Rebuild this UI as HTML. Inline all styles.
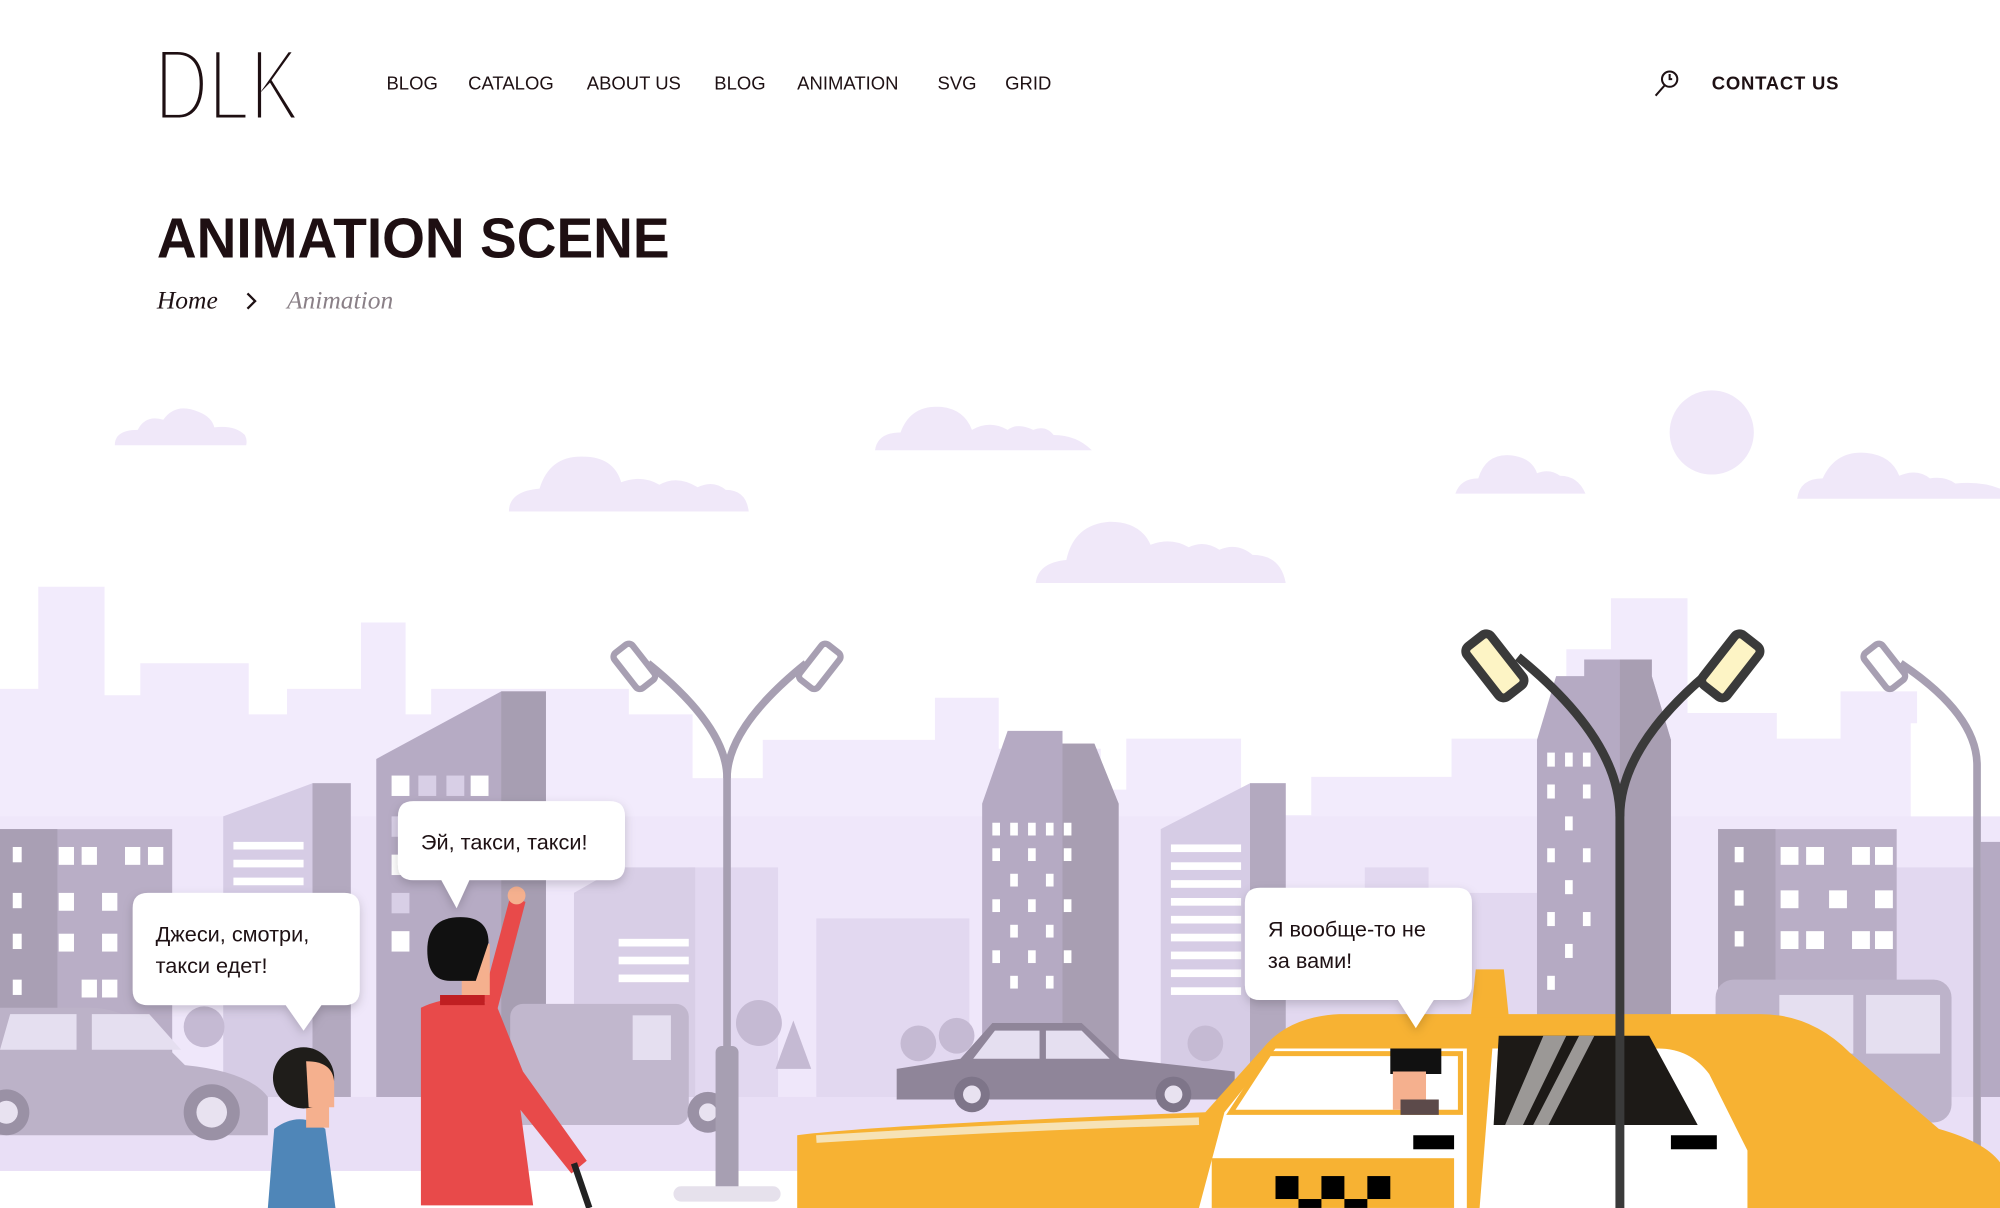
<!DOCTYPE html>
<html><head><meta charset="utf-8"><style>
html,body{margin:0;padding:0;background:#fff;overflow:hidden}
svg{display:block}
</style></head><body>
<svg width="2000" height="1208" viewBox="0 0 1568 947" xmlns="http://www.w3.org/2000/svg" font-family="Liberation Sans, sans-serif">
<defs>
<filter id="sh" x="-20%" y="-20%" width="140%" height="160%"><feDropShadow dx="0" dy="3" stdDeviation="4" flood-color="#000" flood-opacity="0.18"/></filter>
</defs>
<rect width="1568" height="947" fill="#fff"/>
<!-- header -->
<text x="121" y="94" font-size="80" fill="#1e0f12" stroke="#fff" stroke-width="4" textLength="114" lengthAdjust="spacingAndGlyphs">DLK</text>
<g font-size="14.5" fill="#1e1114">
<text x="303" y="70">BLOG</text><text x="367" y="70">CATALOG</text><text x="460" y="70">ABOUT US</text>
<text x="560" y="70">BLOG</text><text x="625" y="70">ANIMATION</text><text x="735" y="70">SVG</text><text x="788" y="70">GRID</text>
<text x="1342" y="70" font-weight="bold" letter-spacing="0.6">CONTACT US</text>
</g>
<g stroke="#1e1114" stroke-width="1.6" fill="none"><circle cx="1309" cy="62" r="6"/><path d="M1305 67 L1298 75"/><path d="M1309 58v4h2"/></g>
<text x="123" y="202" font-size="44" font-weight="bold" fill="#1e0f12" textLength="402" lengthAdjust="spacingAndGlyphs">ANIMATION SCENE</text>
<text x="123" y="242" font-size="20" font-style="italic" font-family="Liberation Serif, serif" fill="#1e1114">Home</text>
<path d="M194 230l6 6-6 6" stroke="#1e1114" stroke-width="1.8" fill="none"/>
<text x="225" y="242" font-size="20" font-style="italic" font-family="Liberation Serif, serif" fill="#8a8087">Animation</text>
<!-- clouds -->
<g fill="#f0e8f9">
<path d="M90 349q0-12 18-12q6-12 20-8q10-14 28-6q10 4 12 12q16-2 24 6q2 4 1 8z"/>
<path d="M686 353q2-14 20-14q8-22 32-20q18 2 24 18q14-8 28 0q8-6 20 0q10-4 16 4q18 0 30 12z"/>
<path d="M399 401q0-16 24-18q8-26 34-25q24 0 30 20q16-6 30 2q14-8 30 2q12-6 22 2q16 0 18 17z"/>
<path d="M1141 387q4-12 18-12q6-20 26-18q16 2 20 14q10-4 18 2q14 0 20 14z"/>
<path d="M1409 391q2-16 20-16q10-22 34-20q20 2 26 18q14-6 24 2q12-2 20 4q20-2 35 4v8z"/>
<path d="M812 457q2-16 24-18q6-28 34-30q24 0 32 18q16-6 30 2q12-6 24 2q14-6 26 4q22 0 26 22z"/>
<circle cx="1342" cy="339" r="33"/>
</g>
<!-- far skyline -->
<path fill="#f2ebfc" d="M0 540h30v-80h52v85h28v-25h85v40h30v-20h58v-52h35v72h20v-20h155v20h50v50h55v-30h135v-33h50v40h80v32h20v-40h90v60h55v-30h110v-30h90v-70h35v-40h60v90h70v20h50v-37h60v25h-5V860H0z"/>
<rect x="0" y="640" width="1568" height="220" fill="#efe7fa"/>
<rect x="0" y="860" width="1568" height="58" fill="#e9dff6"/>
<g fill="#e2d8f0">
<rect x="640" y="720" width="120" height="140"/><rect x="1000" y="700" width="210" height="160"/><rect x="1450" y="680" width="118" height="180"/>
<rect x="540" y="680" width="70" height="180"/><rect x="1070" y="680" width="50" height="180"/>
</g>
<!-- buildings -->
<g>
<rect x="0" y="650" width="135" height="210" fill="#b9aec6"/><rect x="0" y="650" width="45" height="210" fill="#a99fb4"/>
<g fill="#fff"><rect x="46" y="664" width="12" height="14"/><rect x="64" y="664" width="12" height="14"/><rect x="98" y="664" width="12" height="14"/><rect x="116" y="664" width="12" height="14"/>
<rect x="46" y="700" width="12" height="14"/><rect x="80" y="700" width="12" height="14"/><rect x="46" y="732" width="12" height="14"/><rect x="80" y="732" width="12" height="14"/><rect x="64" y="768" width="12" height="14"/><rect x="80" y="768" width="12" height="14"/>
<rect x="10" y="664" width="7" height="12"/><rect x="10" y="700" width="7" height="12"/><rect x="10" y="732" width="7" height="12"/><rect x="10" y="768" width="7" height="12"/></g>
<path d="M175 640l70-26h30v246H175z" fill="#d6cce5"/><rect x="245" y="614" width="30" height="246" fill="#b3a9bf"/>
<g fill="#fff"><rect x="183" y="660" width="55" height="6"/><rect x="183" y="674" width="55" height="6"/><rect x="183" y="688" width="55" height="6"/></g>
<path d="M295 595l98-53h35v318H295z" fill="#b6abc4"/><rect x="393" y="542" width="35" height="318" fill="#a79eb2"/>
<g fill="#fff"><rect x="307" y="608" width="14" height="16"/><rect x="350" y="608" width="14" height="16" fill="#d8cfe6"/><rect x="369" y="608" width="14" height="16"/><rect x="328" y="608" width="14" height="16" fill="#d8cfe6"/>
<rect x="307" y="640" width="14" height="16" fill="#d8cfe6"/><rect x="307" y="670" width="14" height="16"/><rect x="307" y="700" width="14" height="16" fill="#d8cfe6"/><rect x="307" y="730" width="14" height="16"/></g>
<path d="M450 700l35-20h60v180H450z" fill="#d8cee6"/>
<g fill="#fff"><rect x="485" y="736" width="55" height="6"/><rect x="485" y="750" width="55" height="6"/><rect x="485" y="764" width="55" height="6"/></g>
<path d="M770 630l20-57h43v10h25l19 47v230H770z" fill="#b5aac3"/><path d="M833 583h25l19 47v230h-44z" fill="#a89eb2"/>
<g fill="#fff"><rect x="778" y="645" width="6" height="10"/><rect x="792" y="645" width="6" height="10"/><rect x="806" y="645" width="6" height="10"/><rect x="820" y="645" width="6" height="10"/><rect x="834" y="645" width="6" height="10"/>
<rect x="778" y="665" width="6" height="10"/><rect x="806" y="665" width="6" height="10"/><rect x="834" y="665" width="6" height="10"/><rect x="792" y="685" width="6" height="10"/><rect x="820" y="685" width="6" height="10"/>
<rect x="778" y="705" width="6" height="10"/><rect x="806" y="705" width="6" height="10"/><rect x="834" y="705" width="6" height="10"/><rect x="792" y="725" width="6" height="10"/><rect x="820" y="725" width="6" height="10"/>
<rect x="778" y="745" width="6" height="10"/><rect x="806" y="745" width="6" height="10"/><rect x="834" y="745" width="6" height="10"/><rect x="792" y="765" width="6" height="10"/><rect x="820" y="765" width="6" height="10"/></g>
<path d="M910 650l70-36h28v246H910z" fill="#d6cce5"/><rect x="980" y="614" width="28" height="246" fill="#b3a9bf"/>
<g fill="#fff"><rect x="918" y="662" width="55" height="6"/><rect x="918" y="676" width="55" height="6"/><rect x="918" y="690" width="55" height="6"/><rect x="918" y="704" width="55" height="6"/><rect x="918" y="718" width="55" height="6"/><rect x="918" y="732" width="55" height="6"/><rect x="918" y="746" width="55" height="6"/><rect x="918" y="760" width="55" height="6"/><rect x="918" y="774" width="55" height="6"/></g>
<path d="M1205 580l15-50h22v-13h53v13l15 50v280h-105z" fill="#b5aac3"/><path d="M1270 517h25v13l15 50v280h-40z" fill="#a89eb2"/>
<g fill="#fff"><rect x="1213" y="590" width="6" height="11"/><rect x="1227" y="590" width="6" height="11"/><rect x="1241" y="590" width="6" height="11"/><rect x="1213" y="615" width="6" height="11"/><rect x="1241" y="615" width="6" height="11"/><rect x="1227" y="640" width="6" height="11"/><rect x="1213" y="665" width="6" height="11"/><rect x="1241" y="665" width="6" height="11"/><rect x="1227" y="690" width="6" height="11"/><rect x="1213" y="715" width="6" height="11"/><rect x="1241" y="715" width="6" height="11"/><rect x="1227" y="740" width="6" height="11"/><rect x="1213" y="765" width="6" height="11"/></g>
<rect x="1347" y="650" width="140" height="210" fill="#b9aec6"/><rect x="1347" y="650" width="45" height="210" fill="#aba1b6"/>
<g fill="#fff"><rect x="1396" y="664" width="14" height="14"/><rect x="1416" y="664" width="14" height="14"/><rect x="1452" y="664" width="14" height="14"/><rect x="1470" y="664" width="14" height="14"/>
<rect x="1396" y="698" width="14" height="14"/><rect x="1434" y="698" width="14" height="14"/><rect x="1470" y="698" width="14" height="14"/>
<rect x="1396" y="730" width="14" height="14"/><rect x="1416" y="730" width="14" height="14"/><rect x="1452" y="730" width="14" height="14"/><rect x="1470" y="730" width="14" height="14"/>
<rect x="1360" y="664" width="7" height="12"/><rect x="1360" y="698" width="7" height="12"/><rect x="1360" y="730" width="7" height="12"/></g>
<rect x="1553" y="660" width="15" height="200" fill="#b5aac3"/>
</g>
<g fill="#c5bad3"><circle cx="160" cy="805" r="16"/><circle cx="595" cy="802" r="18"/><path d="M622 800l-14 38h28z"/><circle cx="720" cy="818" r="14"/><circle cx="750" cy="812" r="14"/><circle cx="1050" cy="828" r="18"/><circle cx="1093" cy="818" r="14"/><circle cx="945" cy="818" r="14"/></g>
<g>
<path d="M0 790h70q30 0 55 25l20 20q50 5 65 25v30H0z" fill="#bcb2c8"/>
<path d="M8 795h52v28H0z M72 795h45l25 28H72z" fill="#e5dff0"/>
<circle cx="166" cy="872" r="22" fill="#9a91a5"/><circle cx="166" cy="872" r="12" fill="#e8e2f0"/><circle cx="5" cy="872" r="18" fill="#9a91a5"/><circle cx="5" cy="872" r="9" fill="#e8e2f0"/>
<rect x="400" y="787" width="140" height="95" rx="10" fill="#c1b7cd"/><rect x="496" y="796" width="30" height="35" fill="#e5dff0"/><circle cx="555" cy="872" r="16" fill="#9a91a5"/><circle cx="555" cy="872" r="7" fill="#e8e2f0"/>
<path d="M703 838l50-8 25-28h70l30 28 90 10v22H703z" fill="#8f8599"/><path d="M780 808h35v22h-52z M820 808h28l22 22h-50z" fill="#e5dff0"/>
<circle cx="762" cy="858" r="14" fill="#7e7589"/><circle cx="762" cy="858" r="7" fill="#e8e2f0"/><circle cx="920" cy="858" r="14" fill="#7e7589"/><circle cx="920" cy="858" r="7" fill="#e8e2f0"/>
<rect x="1345" y="768" width="185" height="112" rx="14" fill="#bdb3ca"/><rect x="1395" y="780" width="58" height="46" fill="#e5dff0"/><rect x="1463" y="780" width="58" height="46" fill="#e5dff0"/>
</g>
<g fill="none" stroke="#a79fb2" stroke-width="6">
<path d="M570 930V610q0-40-62-90"/><path d="M570 610q0-40 62-90"/>
<path d="M1550 947V600q0-40-60-80"/>
</g>
<g fill="#fff" stroke="#a79fb2" stroke-width="5"><rect x="488" y="505" width="18" height="35" rx="4" transform="rotate(-38 497 522)"/><rect x="634" y="505" width="18" height="35" rx="4" transform="rotate(38 643 522)"/><rect x="1468" y="505" width="18" height="35" rx="4" transform="rotate(-38 1477 522)"/></g>
<rect x="561" y="820" width="18" height="115" rx="5" fill="#a79fb2"/><rect x="528" y="930" width="84" height="12" rx="6" fill="#e6e1ec"/>
<!-- woman -->
<path d="M215 885q20-15 40 0l8 62h-53z" fill="#4f86b8"/>
<path d="M240 852h18v32h-18z" fill="#f5b08e"/>
<circle cx="238" cy="845" r="24" fill="#1f1d1a"/><path d="M240 832q22 0 22 18v18h-20z" fill="#f5b08e"/>
<!-- man -->
<path d="M330 790q30-14 60 0l20 50 50 70-12 10-40-50 10 75h-88z" fill="#e84a4a"/>
<path d="M378 785l22-82 12 4-22 84z" fill="#e84a4a"/><circle cx="405" cy="702" r="7" fill="#f5b08e"/>
<path d="M345 780h35v8h-35z" fill="#c01f22"/>
<path d="M362 740h22v40h-22z" fill="#f5b08e"/>
<path d="M335 745q0-26 26-26q22 0 22 20l-10 30h-20q-18 0-18-24z" fill="#111"/>
<path d="M450 912l12 35" stroke="#222" stroke-width="5"/>
<!-- taxi -->
<path d="M625 890q60-8 320-18l45-50q20-25 60-27h330q40 0 70 30l70 60q70 20 48 60v2H625z" fill="#f7b233"/>
<path d="M960 872l40-50h150v125H940z" fill="#fff"/><path d="M1170 822h130q25 0 40 20l30 60v45h-210z" fill="#fff"/>
<path d="M995 826h150v46h-180z" fill="none" stroke="#f7b233" stroke-width="4"/>
<path d="M1175 812h118l38 70h-160z" fill="#1d1a17"/><path d="M1210 812h18l-34 70h-14z M1238 812h12l-36 70h-12z" fill="#9b9896"/>
<path d="M1157 760h22l4 38h-30z" fill="#f7b233"/>
<rect x="950" y="908" width="190" height="39" fill="#f7b233"/>
<g fill="#000"><rect x="1000" y="922" width="18" height="18"/><rect x="1036" y="922" width="18" height="18"/><rect x="1072" y="922" width="18" height="18"/><rect x="1018" y="940" width="18" height="7"/><rect x="1054" y="940" width="18" height="7"/></g>
<rect x="1108" y="890" width="32" height="11" fill="#000"/><rect x="1310" y="890" width="36" height="11" fill="#000"/>
<path d="M1090 822h40v20h-40z" fill="#111"/><path d="M1092 840h26v30h-26z" fill="#f5b08e"/><path d="M1098 862h30v12h-30z" fill="#5c4a4a"/>
<path d="M640 893q160-10 300-14" stroke="#f6e2b6" stroke-width="6" fill="none"/>
<g fill="none" stroke="#3a3a3a" stroke-width="7"><path d="M1270 947V640q0-60-80-125"/><path d="M1270 640q0-60 85-125"/></g>
<g fill="#fdf4c5" stroke="#3a3a3a" stroke-width="7"><rect x="1160" y="497" width="24" height="50" rx="5" transform="rotate(-38 1172 522)"/><rect x="1345" y="497" width="24" height="50" rx="5" transform="rotate(38 1357 522)"/></g>
<!-- bubbles -->
<g filter="url(#sh)" fill="#fff">
<path d="M116 700h154q12 0 12 12v64q0 12-12 12h-18l-14 20-14-20H116q-12 0-12-12v-64q0-12 12-12z"/>
<path d="M324 628h154q12 0 12 12v38q0 12-12 12h-110l-10 22-12-22h-22q-12 0-12-12v-38q0-12 12-12z"/>
<path d="M988 696h154q12 0 12 12v64q0 12-12 12h-18l-14 22-14-22H988q-12 0-12-12v-64q0-12 12-12z"/>
</g>
<g font-size="17" fill="#1e1114">
<text x="122" y="738">Джеси, смотри,</text><text x="122" y="763">такси едет!</text>
<text x="330" y="666">Эй, такси, такси!</text>
<text x="994" y="734">Я вообще-то не</text><text x="994" y="759">за вами!</text>
</g>
</svg>
</body></html>
